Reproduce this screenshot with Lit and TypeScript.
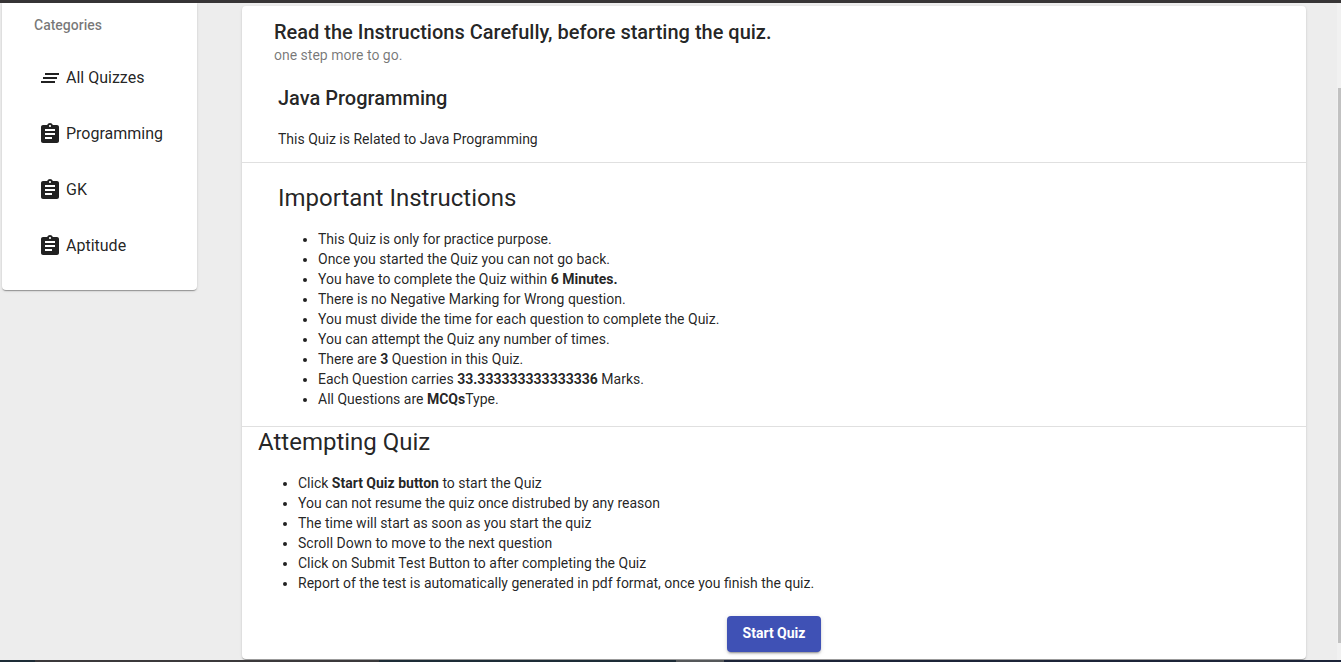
import { LitElement, html, css, svg } from "lit";
import { customElement, property } from "lit/decorators.js";

const ICONS = {
  all: svg`<path d="M5 13h14v-2H5v2zm-2 4h14v-2H3v2zM7 7v2h14V7H7z"/>`,
  quiz: svg`<path d="M19 3h-4.18C14.4 1.84 13.3 1 12 1c-1.3 0-2.4.84-2.82 2H5c-1.1 0-2 .9-2 2v14c0 1.1.9 2 2 2h14c1.1 0 2-.9 2-2V5c0-1.1-.9-2-2-2zm-7 0c.55 0 1 .45 1 1s-.45 1-1 1-1-.45-1-1 .45-1 1-1zm2 14H7v-2h7v2zm3-4H7v-2h10v2zm0-4H7V7h10v2z"/>`,
};

const CATEGORIES: { label: string; icon: keyof typeof ICONS }[] = [
  { label: "All Quizzes", icon: "all" },
  { label: "Programming", icon: "quiz" },
  { label: "GK", icon: "quiz" },
  { label: "Aptitude", icon: "quiz" },
];

@customElement("quiz-sidebar")
export class QuizSidebar extends LitElement {
  static styles = css`
    :host {
      display: block;
      background: #fff;
      border-radius: 0 0 4px 4px;
      padding: 12px 0 16px;
      box-shadow: 0 2px 1px -1px rgba(0, 0, 0, 0.2),
        0 1px 1px 0 rgba(0, 0, 0, 0.14), 0 1px 3px 0 rgba(0, 0, 0, 0.12);
    }
    .heading {
      margin: 0 0 15px;
      padding: 0 32px;
      font-size: 14px;
      line-height: 20px;
      font-weight: 500;
      color: rgba(0, 0, 0, 0.54);
    }
    .item {
      display: flex;
      align-items: center;
      gap: 4px;
      width: 100%;
      height: 56px;
      padding: 0 16px 0 36px;
      border: 0;
      background: none;
      font: inherit;
      font-size: 16px;
      line-height: 24px;
      color: rgba(0, 0, 0, 0.87);
      cursor: pointer;
    }
    .icon {
      width: 24px;
      height: 24px;
      fill: currentColor;
    }
  `;

  render() {
    return html`
      <h3 class="heading">Categories</h3>
      <nav>
        ${CATEGORIES.map(
          (c) => html`<button class="item" type="button">
            <svg class="icon" viewBox="0 0 24 24" aria-hidden="true">${ICONS[c.icon]}</svg>
            <span>${c.label}</span>
          </button>`
        )}
      </nav>
    `;
  }
}

@customElement("quiz-instructions")
export class QuizInstructions extends LitElement {
  @property() name = "Java Programming";
  @property({ type: Number }) minutes = 6;
  @property({ type: Number }) questions = 3;
  @property() marks = "33.333333333333336";

  static styles = css`
    :host {
      display: block;
      background: #fff;
      border-radius: 4px;
      padding: 16px 0 7px;
      font-size: 14px;
      line-height: 20px;
      box-shadow: 0 2px 1px -1px rgba(0, 0, 0, 0.2),
        0 1px 1px 0 rgba(0, 0, 0, 0.14), 0 1px 3px 0 rgba(0, 0, 0, 0.12);
    }
    .header {
      padding: 0 32px;
    }
    .title {
      margin: 0 0 3px;
      font-size: 20px;
      line-height: 20px;
      font-weight: 500;
    }
    .subtitle {
      margin: 0;
      color: rgba(0, 0, 0, 0.54);
    }
    .section {
      padding: 17px 36px 13px;
      border-bottom: 1px solid rgba(0, 0, 0, 0.12);
    }
    .name {
      margin: 0 0 15px;
      font-size: 20px;
      line-height: 32px;
      font-weight: 500;
    }
    .text {
      margin: 0;
    }
    .rules {
      padding: 20px 36px 17px;
    }
    .attempt {
      padding: 0 16px;
    }
    .big {
      margin: 0 0 16px;
      font-size: 24px;
      line-height: 30px;
      font-weight: 400;
    }
    .list {
      margin: 0;
      padding-left: 40px;
    }
    .actions {
      display: flex;
      justify-content: center;
      padding-top: 23px;
    }
    .start {
      height: 36px;
      padding: 0 16px 2px;
      border: 0;
      border-radius: 4px;
      background: #3f51b5;
      color: #fff;
      font: inherit;
      font-weight: 700;
      cursor: pointer;
      box-shadow: 0 3px 1px -2px rgba(0, 0, 0, 0.2),
        0 2px 2px 0 rgba(0, 0, 0, 0.14), 0 1px 5px 0 rgba(0, 0, 0, 0.12);
    }
  `;

  render() {
    return html`
      <header class="header">
        <h1 class="title">Read the Instructions Carefully, before starting the quiz.</h1>
        <p class="subtitle">one step more to go.</p>
      </header>
      <section class="section">
        <h2 class="name">${this.name}</h2>
        <p class="text">This Quiz is Related to ${this.name}</p>
      </section>
      <section class="section rules">
        <h2 class="big">Important Instructions</h2>
        <ul class="list">
          <li>This Quiz is only for practice purpose.</li>
          <li>Once you started the Quiz you can not go back.</li>
          <li>You have to complete the Quiz within <b>${this.minutes} Minutes.</b></li>
          <li>There is no Negative Marking for Wrong question.</li>
          <li>You must divide the time for each question to complete the Quiz.</li>
          <li>You can attempt the Quiz any number of times.</li>
          <li>There are <b>${this.questions}</b> Question in this Quiz.</li>
          <li>Each Question carries <b>${this.marks}</b> Marks.</li>
          <li>All Questions are <b>MCQs</b>Type.</li>
        </ul>
      </section>
      <section class="attempt">
        <h2 class="big">Attempting Quiz</h2>
        <ul class="list">
          <li>Click <b>Start Quiz button</b> to start the Quiz</li>
          <li>You can not resume the quiz once distrubed by any reason</li>
          <li>The time will start as soon as you start the quiz</li>
          <li>Scroll Down to move to the next question</li>
          <li>Click on Submit Test Button to after completing the Quiz</li>
          <li>Report of the test is automatically generated in pdf format, once you finish the quiz.</li>
        </ul>
        <div class="actions">
          <button class="start" type="button">Start Quiz</button>
        </div>
      </section>
    `;
  }
}

@customElement("app-root")
export class AppRoot extends LitElement {
  static styles = css`
    :host {
      display: flex;
      flex-direction: column;
      min-height: 100vh;
      background: #ededed;
      color: rgba(0, 0, 0, 0.87);
      font-family: Roboto, "Liberation Sans", sans-serif;
    }
    .top {
      height: 3px;
      background: #373536;
    }
    .body {
      flex: 1;
      display: flex;
      align-items: flex-start;
      padding-left: 2px;
    }
    .side {
      flex: 0 0 195px;
    }
    .main {
      flex: 1;
      margin: 3px 31px 1px 45px;
    }
    .scroll {
      align-self: stretch;
      width: 4px;
      box-sizing: border-box;
      padding: 85px 0 17px;
      display: flex;
      background: #f1f1f1;
    }
    .thumb {
      flex: 1;
      margin-left: 1px;
      background: #c1c1c1;
    }
    .bottom {
      display: grid;
      grid-template-columns: 35fr 344fr 297fr 48fr 617fr;
      height: 2px;
    }
    .teal {
      background: #1d2c36;
    }
    .dark {
      background: #3b393b;
    }
    .grey {
      background: #55585a;
    }
    .navy {
      background: #1c2438;
    }
  `;

  render() {
    return html`
      <div class="top"></div>
      <div class="body">
        <quiz-sidebar class="side"></quiz-sidebar>
        <quiz-instructions class="main"></quiz-instructions>
        <div class="scroll" aria-hidden="true"><div class="thumb"></div></div>
      </div>
      <div class="bottom" aria-hidden="true">
        <div class="teal"></div>
        <div class="dark"></div>
        <div class="teal"></div>
        <div class="grey"></div>
        <div class="navy"></div>
      </div>
    `;
  }
}
